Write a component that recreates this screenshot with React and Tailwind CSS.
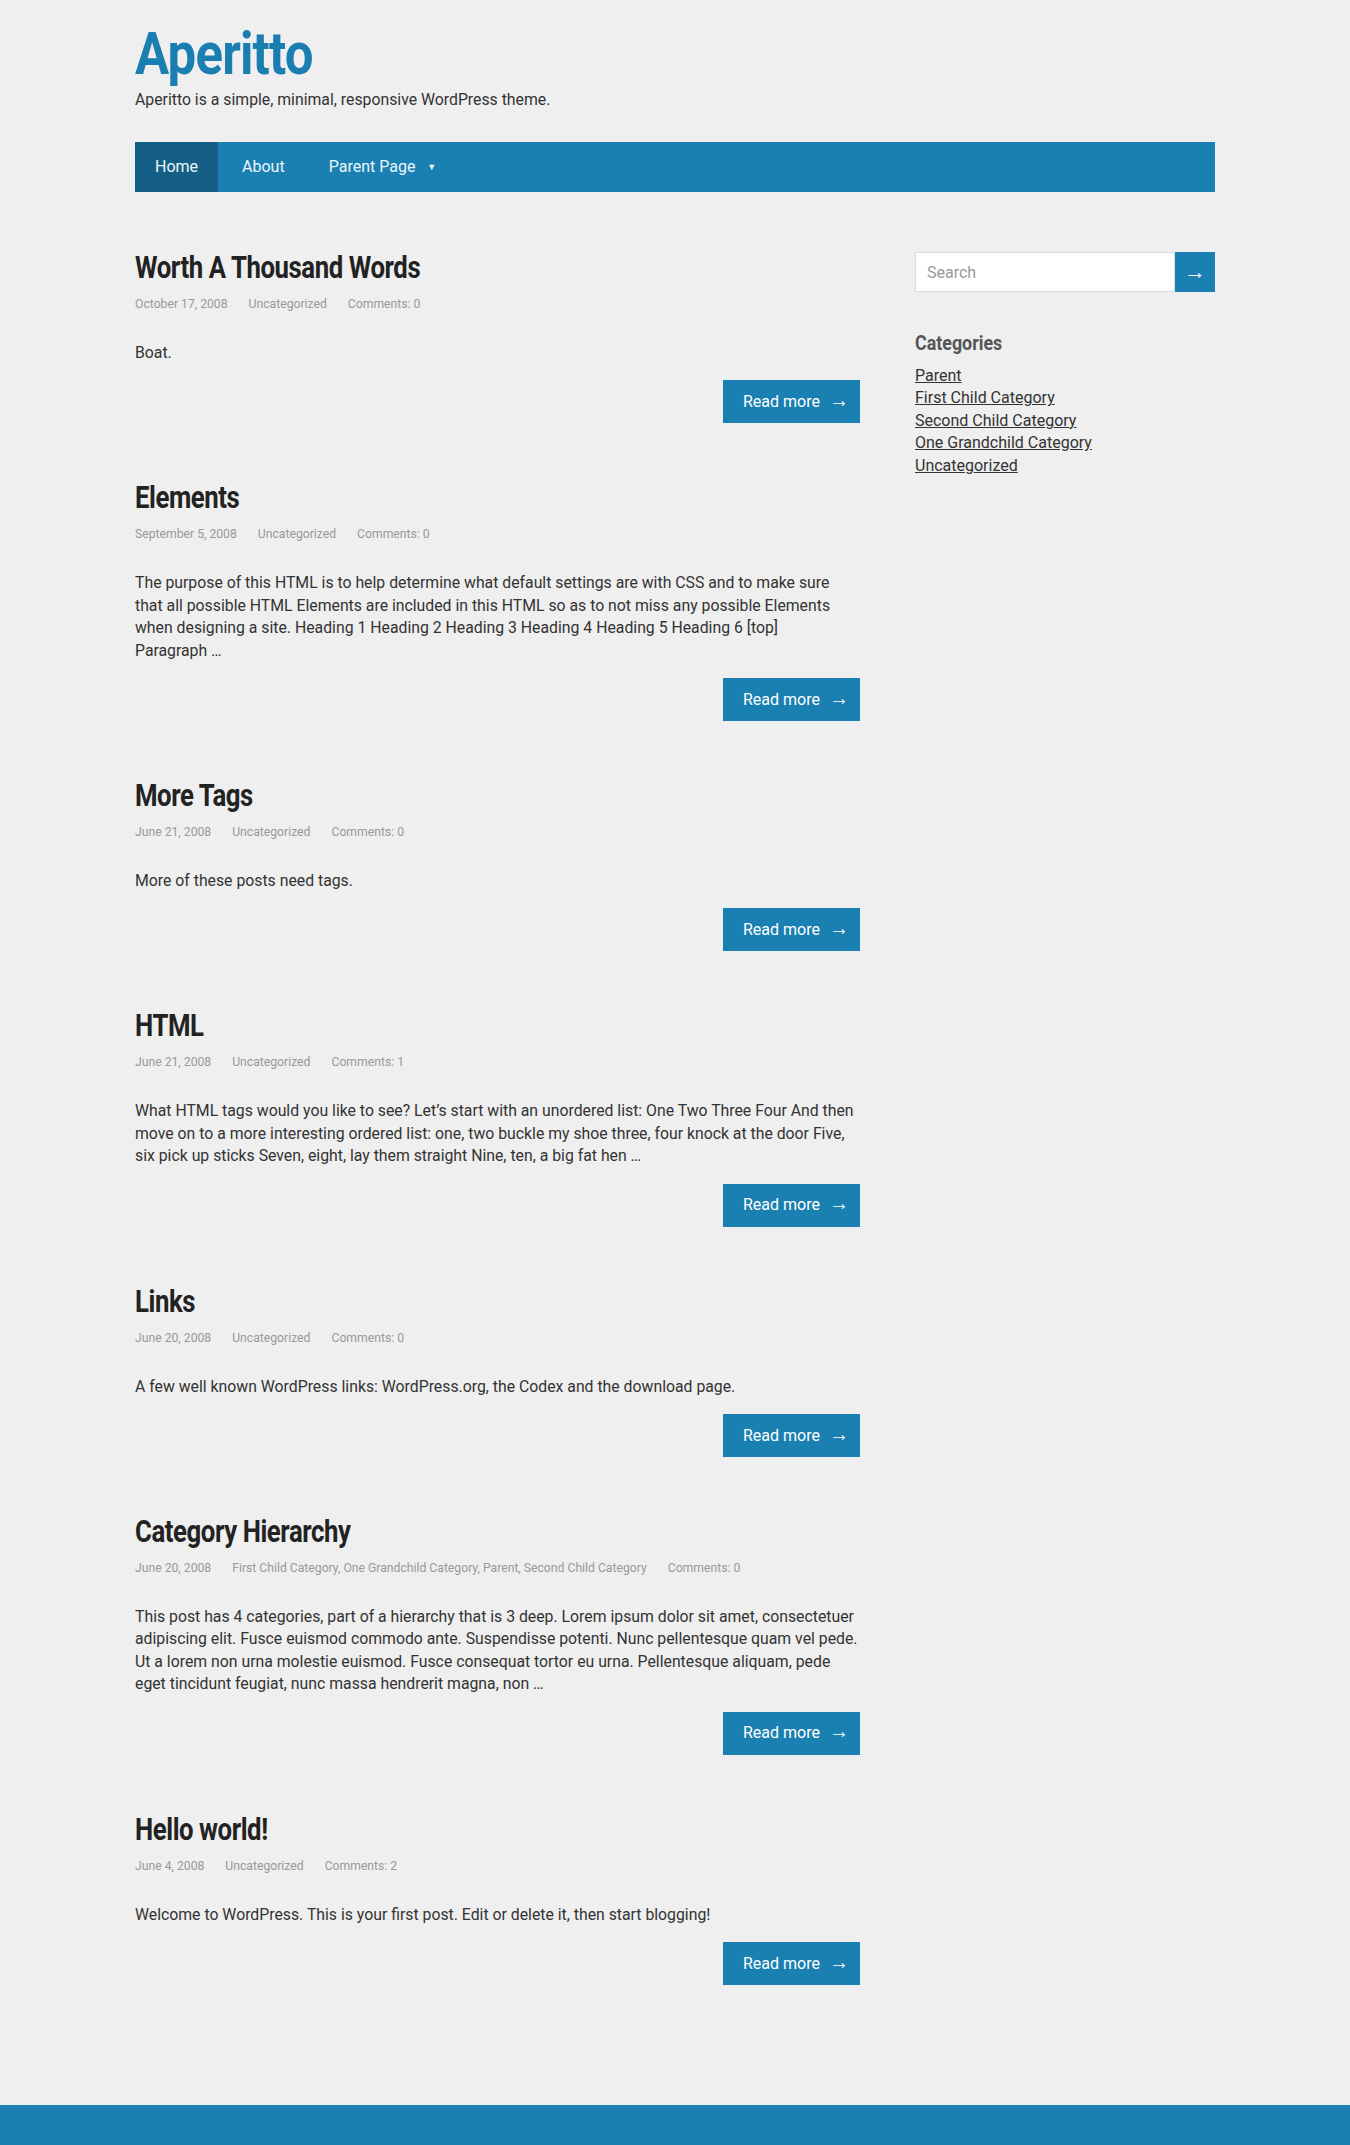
import React from 'react';

// excerpts end with a non-breaking space before the ellipsis
const posts = [
    {
        title: "Worth A Thousand Words",
        date: "October 17, 2008",
        cats: "Uncategorized",
        comments: "Comments: 0",
        excerpt: "Boat.",
    },
    {
        title: "Elements",
        date: "September 5, 2008",
        cats: "Uncategorized",
        comments: "Comments: 0",
        excerpt: "The purpose of this HTML is to help determine what default settings are with CSS and to make sure that all possible HTML Elements are included in this HTML so as to not miss any possible Elements when designing a site. Heading 1 Heading 2 Heading 3 Heading 4 Heading 5 Heading 6 [top] Paragraph\u00a0…",
    },
    {
        title: "More Tags",
        date: "June 21, 2008",
        cats: "Uncategorized",
        comments: "Comments: 0",
        excerpt: "More of these posts need tags.",
    },
    {
        title: "HTML",
        date: "June 21, 2008",
        cats: "Uncategorized",
        comments: "Comments: 1",
        excerpt: "What HTML tags would you like to see? Let’s start with an unordered list: One Two Three Four And then move on to a more interesting ordered list: one, two buckle my shoe three, four knock at the door Five, six pick up sticks Seven, eight, lay them straight Nine, ten, a big fat hen\u00a0…",
    },
    {
        title: "Links",
        date: "June 20, 2008",
        cats: "Uncategorized",
        comments: "Comments: 0",
        excerpt: "A few well known WordPress links: WordPress.org, the Codex and the download page.",
    },
    {
        title: "Category Hierarchy",
        date: "June 20, 2008",
        cats: "First Child Category, One Grandchild Category, Parent, Second Child Category",
        comments: "Comments: 0",
        excerpt: "This post has 4 categories, part of a hierarchy that is 3 deep. Lorem ipsum dolor sit amet, consectetuer adipiscing elit. Fusce euismod commodo ante. Suspendisse potenti. Nunc pellentesque quam vel pede. Ut a lorem non urna molestie euismod. Fusce consequat tortor eu urna. Pellentesque aliquam, pede eget tincidunt feugiat, nunc massa hendrerit magna, non\u00a0…",
    },
    {
        title: "Hello world!",
        date: "June 4, 2008",
        cats: "Uncategorized",
        comments: "Comments: 2",
        excerpt: "Welcome to WordPress. This is your first post. Edit or delete it, then start blogging!",
    },
];

const categories = ["Parent", "First Child Category", "Second Child Category", "One Grandchild Category", "Uncategorized"];

function Post({ post }) {
    return (
        <article className="mb-14">
            <h2 className="text-[31px] leading-[38px] font-bold text-[#222] tracking-[-0.5px] whitespace-nowrap origin-left scale-x-[0.83]">
                {post.title}
            </h2>
            <div className="mt-2 flex gap-[21px] text-[12.2px] leading-[18px] text-[#999]">
                <span>{post.date}</span>
                <span>{post.cats}</span>
                <span>{post.comments}</span>
            </div>
            <p className="mt-[29px] text-[15.8px] leading-[22.4px] text-[#333]">{post.excerpt}</p>
            <div className="mt-4 flex justify-end">
                <a href="#" className="h-[43px] w-[137px] flex items-center pl-5 gap-[9px] bg-[#1a7fb1] text-white text-[16px]">
                    Read more <span className="text-[20px] leading-none font-light -translate-y-[2px]">→</span>
                </a>
            </div>
        </article>
    );
}

function App() {
    return (
        <div className="min-h-screen flex flex-col bg-[#efefef] font-['Roboto','Liberation_Sans',sans-serif] text-[#333]">
            <header className="w-[1080px] mx-auto pt-6">
                <h1 className="text-[60px] leading-[60px] font-bold text-[#1a7eb0] tracking-[-1px] origin-left scale-x-[0.85]">Aperitto</h1>
                <p className="mt-[5px] text-[15.8px] leading-[22px] text-[#333]">Aperitto is a simple, minimal, responsive WordPress theme.</p>
                <nav className="mt-[31px] h-[50px] bg-[#1a7fb1] flex gap-1 text-[16px] text-[#eaf6fc]">
                    <a href="#" className="px-5 leading-[50px] bg-[#155f87]">Home</a>
                    <a href="#" className="px-5 leading-[50px]">About</a>
                    <a href="#" className="px-5 leading-[50px] flex items-center gap-3">
                        Parent Page <span className="text-[9px]">▼</span>
                    </a>
                </nav>
            </header>

            <div className="w-[1080px] mx-auto flex gap-[55px] pt-[57px] pb-16">
                <main className="w-[725px]">
                    {posts.map((p) => <Post key={p.title} post={p} />)}
                </main>

                <aside className="w-[300px] pt-[3px]">
                    <form className="flex h-10">
                        <input
                            type="text"
                            placeholder="Search"
                            className="w-[260px] h-10 px-[11px] bg-white border border-[#ddd] text-[16px] placeholder:text-[#999] outline-none"
                        />
                        <button type="button" className="w-10 h-10 bg-[#1a7fb1] text-white text-[22px] leading-none font-light flex items-center justify-center">→</button>
                    </form>

                    <h3 className="mt-[38px] text-[21px] leading-[26px] font-bold text-[#555] origin-left scale-x-[0.85]">Categories</h3>
                    <ul className="mt-[9px] text-[16px] leading-[22.4px]">
                        {categories.map((c) => (
                            <li key={c}><a href="#" className="underline text-[#333]">{c}</a></li>
                        ))}
                    </ul>
                </aside>
            </div>

            <footer className="mt-auto h-[41px] bg-[#1a7fb1]"></footer>
        </div>
    );
}

export default App;
